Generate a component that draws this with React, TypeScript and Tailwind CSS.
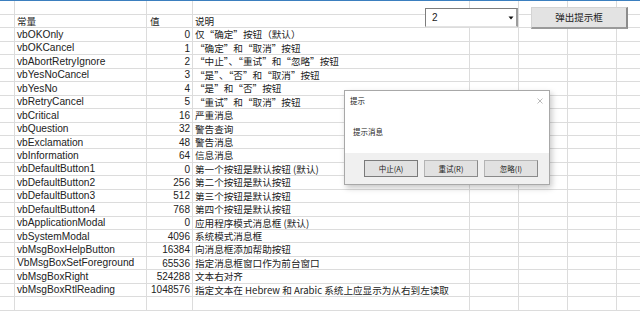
import React from "react";

type Row = { name: string; value: string; desc: string };

const rows: Row[] = [
  { name: "vbOKOnly", value: "0", desc: "仅“确定”按钮（默认）" },
  { name: "vbOKCancel", value: "1", desc: "“确定”和“取消”按钮" },
  { name: "vbAbortRetryIgnore", value: "2", desc: "“中止”、“重试”和“忽略”按钮" },
  { name: "vbYesNoCancel", value: "3", desc: "“是”、“否”和“取消”按钮" },
  { name: "vbYesNo", value: "4", desc: "“是”和“否”按钮" },
  { name: "vbRetryCancel", value: "5", desc: "“重试”和“取消”按钮" },
  { name: "vbCritical", value: "16", desc: "严重消息" },
  { name: "vbQuestion", value: "32", desc: "警告查询" },
  { name: "vbExclamation", value: "48", desc: "警告消息" },
  { name: "vbInformation", value: "64", desc: "信息消息" },
  { name: "vbDefaultButton1", value: "0", desc: "第一个按钮是默认按钮 (默认)" },
  { name: "vbDefaultButton2", value: "256", desc: "第二个按钮是默认按钮" },
  { name: "vbDefaultButton3", value: "512", desc: "第三个按钮是默认按钮" },
  { name: "vbDefaultButton4", value: "768", desc: "第四个按钮是默认按钮" },
  { name: "vbApplicationModal", value: "0", desc: "应用程序模式消息框 (默认)" },
  { name: "vbSystemModal", value: "4096", desc: "系统模式消息框" },
  { name: "vbMsgBoxHelpButton", value: "16384", desc: "向消息框添加帮助按钮" },
  { name: "VbMsgBoxSetForeground", value: "65536", desc: "指定消息框窗口作为前台窗口" },
  { name: "vbMsgBoxRight", value: "524288", desc: "文本右对齐" },
  { name: "vbMsgBoxRtlReading", value: "1048576", desc: "指定文本在 Hebrew 和 Arabic 系统上应显示为从右到左读取" },
  { name: "", value: "", desc: "" },
];

const latin = "font-['Liberation_Sans','Noto_Sans_CJK_SC',sans-serif]";
const cjk = "font-['Noto_Sans_CJK_SC','Liberation_Sans',sans-serif]";
const cell = "h-full shrink-0 border-r border-[#dcdcdc] flex items-center overflow-hidden whitespace-nowrap";

function SheetRow({ name, value, desc, header, first }: { name: string; value: string; desc: string; header?: boolean; first?: boolean }) {
  return (
    <div className={`flex border-b border-[#dcdcdc] ${first ? "h-[14px]" : "h-[13.45px]"}`}>
      <div className={`${cell} w-[15px]`} />
      <div className={`${cell} w-[132px] pl-[2px] ${header ? cjk + " text-[9.6px]" : latin + " text-[10.2px]"}`}>{name}</div>
      <div className={`${cell} w-[46px] ${header ? "pl-[3px] " + cjk + " text-[9.6px]" : "justify-end pr-[2px] " + latin + " text-[10px]"}`}>{value}</div>
      <div className={`${cell} w-[277px] pl-[2px] ${cjk} text-[9.6px]`}>{desc}</div>
      <div className={`${cell} w-[49px]`} />
      <div className={`${cell} w-[49px]`} />
      <div className={`${cell} w-[49px]`} />
      <div className={`${cell} w-[49px]`} />
    </div>
  );
}

function DialogButton({ label, primary }: { label: string; primary?: boolean }) {
  return (
    <div
      className={`w-[54px] h-[17px] flex items-center justify-center bg-[#e1e1e1] text-[7.5px] text-[#222] ${cjk} border ${
        primary ? "border-[#7a7a7a]" : "border-[#b4b4b4] border-b-[#8a8a8a] border-r-[#8a8a8a]"
      }`}
    >
      {label}
    </div>
  );
}

export default function App() {
  return (
    <div className="relative w-[640px] h-[311px] overflow-hidden bg-white text-[#222]">
      <div className="h-[1px] bg-[#3b7fbf]" />
      <div className="flex flex-col">
        <SheetRow name="" value="" desc="" first />
        <SheetRow name="常量" value="值" desc="说明" header />
        {rows.map((r, i) => (
          <SheetRow key={i} name={r.name} value={r.value} desc={r.desc} />
        ))}
      </div>

      {/* combo box control */}
      <div className="absolute left-[425px] top-[8px] w-[93px] h-[19px] bg-white border-t border-l border-[#7d7d7d] border-r-2 border-r-[#9d9d9d] border-b border-b-[#e3e3e3] flex items-center">
        <span className={`pl-[6px] text-[10px] ${latin}`}>2</span>
        <svg className="absolute right-[2px] top-[7px]" width="6" height="4" viewBox="0 0 6 4">
          <path d="M0.5 0.5 L5.5 0.5 L3 3.5 Z" fill="#111" />
        </svg>
      </div>

      {/* command button */}
      <div
        className={`absolute left-[531px] top-[7px] w-[97px] h-[22px] bg-[#e3e3e3] border border-[#d4d4d4] border-r-2 border-r-[#8c8c8c] border-b-2 border-b-[#9a9a9a] flex items-center justify-center text-[9.5px] text-[#222] ${cjk}`}
      >
        弹出提示框
      </div>

      {/* message box */}
      <div className="absolute left-[344px] top-[90px] w-[206px] h-[95px] bg-white border border-[#a8a8a8] shadow-[2px_3px_6px_rgba(0,0,0,0.22)] flex flex-col">
        <div className="h-[19px] flex items-center justify-between pl-[5px] pr-[6px]">
          <span className={`text-[7.5px] ${cjk}`}>提示</span>
          <svg width="6" height="6" viewBox="0 0 6 6">
            <path d="M0.5 0.5 L5.5 5.5 M5.5 0.5 L0.5 5.5" stroke="#a8a8a8" strokeWidth="0.8" />
          </svg>
        </div>
        <div className={`flex-1 pl-[8px] pt-[17px] text-[7.5px] leading-[10px] ${cjk}`}>提示消息</div>
        <div className="h-[31px] bg-[#f0f0f0] flex justify-end gap-[6px] pr-[11px] pt-[7px]">
          <DialogButton label="中止(A)" primary />
          <DialogButton label="重试(R)" />
          <DialogButton label="忽略(I)" />
        </div>
      </div>
    </div>
  );
}
